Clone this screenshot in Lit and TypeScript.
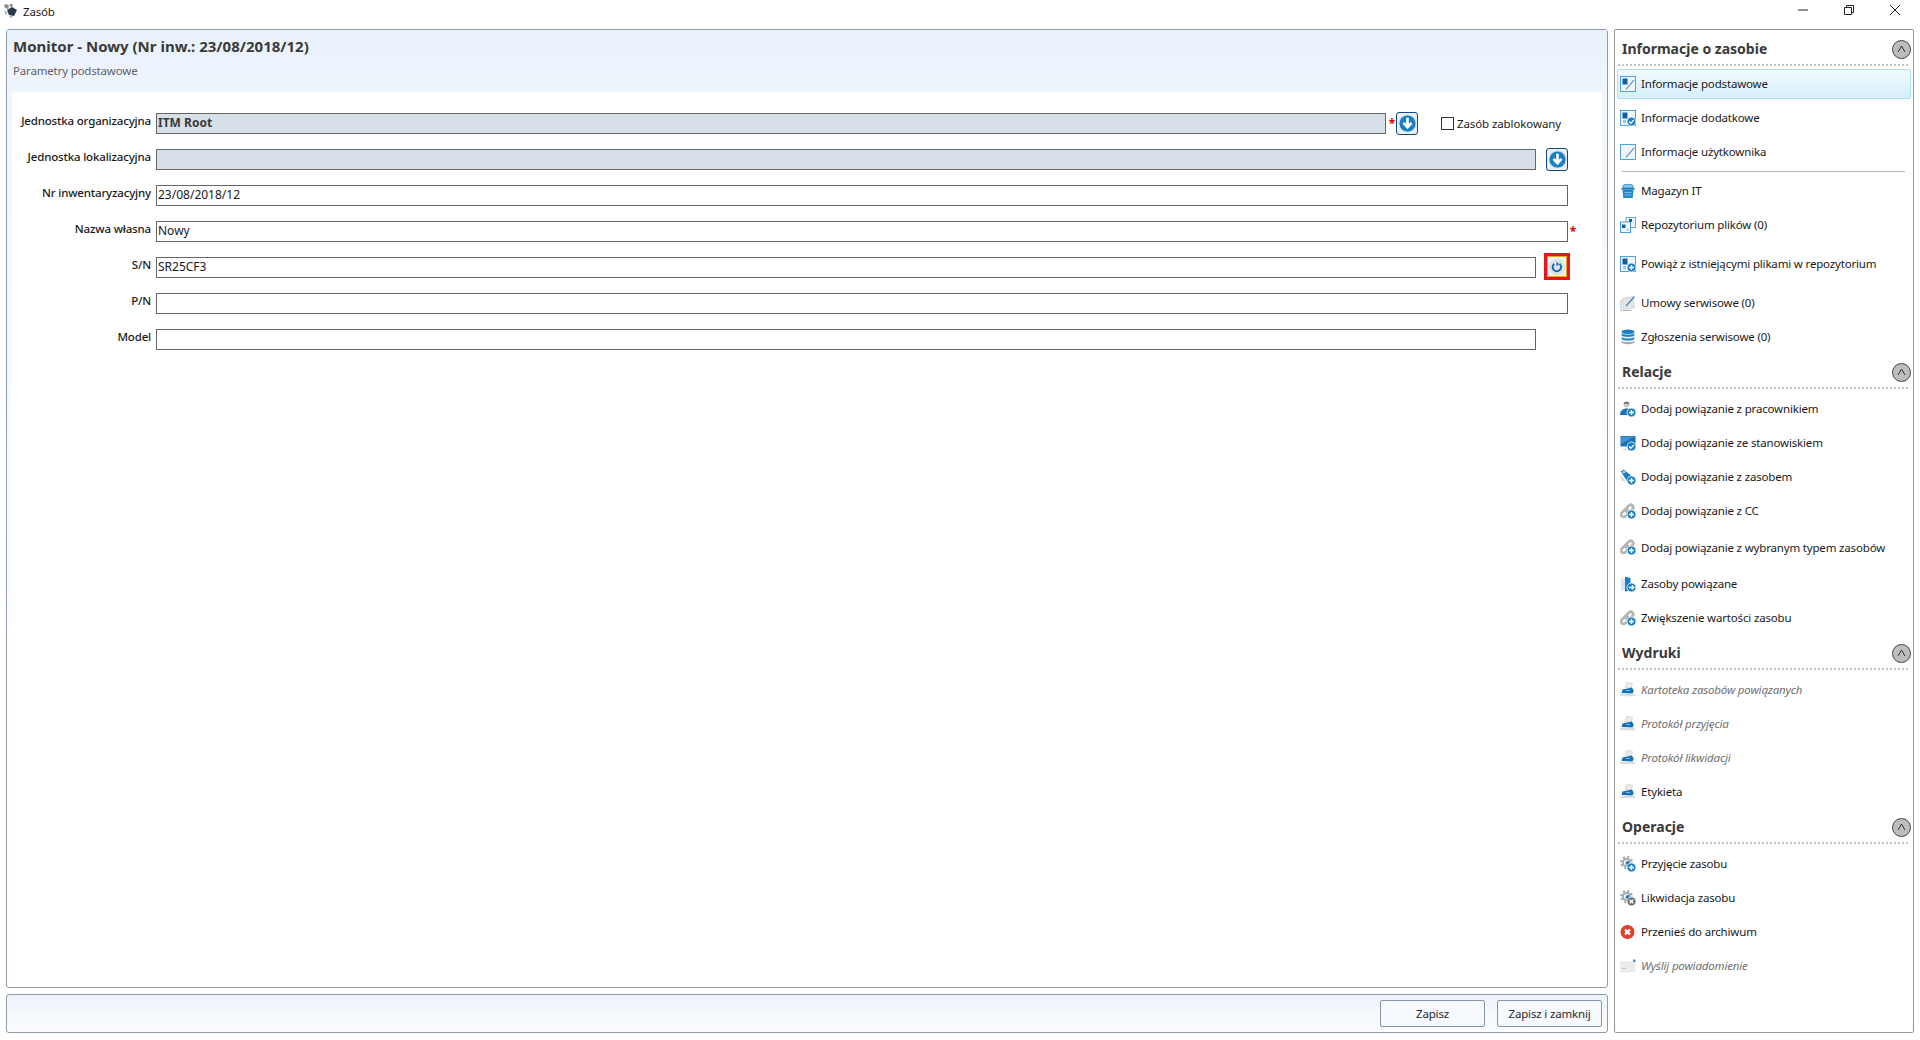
import { LitElement, html, css, svg } from "lit";
import { customElement } from "lit/decorators.js";

const plus = svg`<circle cx="11.5" cy="11.5" r="4.5" fill="#1b7fc4" stroke="#fff" stroke-width=".8"/><path d="M9 11.5h5M11.5 9v5" stroke="#fff" stroke-width="1.5"/>`;
const check = svg`<circle cx="11.5" cy="11.5" r="4.5" fill="#1b7fc4" stroke="#fff" stroke-width=".8"/><path d="M9.2 11.5l1.7 1.8 3-3.4" stroke="#fff" stroke-width="1.4" fill="none"/>`;
const arrow = svg`<circle cx="11.5" cy="11.5" r="4.5" fill="#1b7fc4" stroke="#fff" stroke-width=".8"/><path d="M9 11.5h4.5M11.8 9.5l2 2-2 2" stroke="#fff" stroke-width="1.3" fill="none"/>`;
const xbadge = svg`<circle cx="11.5" cy="11.5" r="4.5" fill="#6f6f6f" stroke="#fff" stroke-width=".8"/><path d="M9.7 9.7l3.6 3.6M13.3 9.7l-3.6 3.6" stroke="#fff" stroke-width="1.3"/>`;
const frame = svg`<rect x=".5" y=".5" width="15" height="15" fill="#eef6fc" stroke="#4fa3dc"/>`;
const slash = svg`<path d="M6 13.500L14 4" stroke="#3f86bd" stroke-width="1.100"/>`;
const chain = svg`<g transform="rotate(-45 7.500 7.500)" fill="none" stroke="#b6b6b6" stroke-width="2.800"><rect x="-.5" y="5" width="8.500" height="5" rx="2.500"/><rect x="6" y="5" width="8.500" height="5" rx="2.500"/></g>`;
const gears = svg`<circle cx="6.500" cy="6.500" r="5.300" fill="none" stroke="#a4a9ae" stroke-width="2.400" stroke-dasharray="2 2.160"/><circle cx="6.500" cy="6.500" r="3.600" fill="none" stroke="#a4a9ae" stroke-width="2"/><circle cx="7.500" cy="7" r="2" fill="#2f7fbe"/>`;
const printer = svg`<path d="M5 5.500L6.500 0l6 1.500L11.500 6z" fill="#eaeaea" stroke="#cfcfcf" stroke-width=".6"/><path d="M1.500 11l1-3.500 9.500-2 1.800 3.500-1.300 2.500z" fill="#1671ba"/><path d="M0 12h14.500l.5 2.300H.5z" fill="#dcdcdc"/><path d="M6 8.500h4" stroke="#7db7e4" stroke-width="1"/>`;

const icons: Record<string, unknown> = {
  basic: svg`${frame}<rect x="2.500" y="2.500" width="5" height="6" fill="#12619f"/>${slash}`,
  extra: svg`${frame}<rect x="2.500" y="2.500" width="5" height="6" fill="#12619f"/><rect x="3" y="10" width="3" height="3" fill="#9cc7e8"/>${check}`,
  user: svg`${frame}${slash}`,
  store: svg`<path d="M3 2.500C3 1 13 1 13 2.500V5H3z" fill="#8ec6ea" stroke="#1b7fc4" stroke-width=".8"/><path d="M1.500 5h13v1.800h-13z" fill="#1b7fc4"/><path d="M2.500 7h11l-.8 8H3.300z" fill="#2289ce"/><path d="M4.500 9.500h7M4.500 12h7" stroke="#8ec6ea" stroke-width=".8"/>`,
  repo: svg`<rect x="6" y=".5" width="9.500" height="10" fill="#eaf3fa" stroke="#6aa8d8"/><rect x="9" y="2" width="3" height="3" fill="#12619f"/><rect x=".5" y="5" width="10" height="10.500" fill="#f6fafd" stroke="#4a9ad4"/><rect x="2" y="7.500" width="3.500" height="3.500" fill="#12619f"/><rect x="6.500" y="11.500" width="2.500" height="2.500" fill="#b8d6ee"/>`,
  bind: svg`${frame}<rect x="2.500" y="2.500" width="5" height="6" fill="#12619f"/><rect x="3" y="10" width="3" height="3" fill="#9cc7e8"/>${plus}`,
  contract: svg`<path d="M2.500 3.500L12.500 1.500l2 11-11 2.500z" fill="#e4e4e4" stroke="#c9c9c9" stroke-width=".7"/><path d="M1 5v10.500h11" fill="none" stroke="#bdbdbd"/><path d="M6 11l8.500-9.500" stroke="#3f87bd" stroke-width="1.200"/>`,
  db: svg`<ellipse cx="8" cy="2.800" rx="6.500" ry="2.300" fill="#1b7fc4"/><path d="M1.500 3.800v2.600C3 8.700 13 8.700 14.500 6.400V3.800C13 6 3 6 1.500 3.800z" fill="#1b7fc4" stroke="#fff" stroke-width=".4"/><path d="M1.500 7.600v2.600C3 12.500 13 12.500 14.500 10.200V7.600C13 9.800 3 9.800 1.500 7.600z" fill="#2a8ccf" stroke="#fff" stroke-width=".4"/><path d="M1.500 11.400v1.800C3 15.800 13 15.800 14.500 13.200v-1.800C13 13.600 3 13.600 1.500 11.400z" fill="#a2a8ad"/>`,
  person: svg`<circle cx="6.500" cy="3.500" r="3" fill="#c9c9c9"/><path d="M3.500 3c1-3 5-3 6 0-2-.8-4-.8-6 0z" fill="#666"/><path d="M0 14c0-4 3-6.500 6.500-6.500S13 10 13 14z" fill="#1873b9"/>${plus}`,
  monitor: svg`<rect x=".5" y="1" width="15" height="10.500" fill="#1b6eb0"/><path d="M1 1.500h14L1 9z" fill="#3f95d2"/><path d="M4 13.500h8l1.500 2h-11z" fill="#dedede"/>${check}`,
  mouse: svg`<path d="M.8 2.200L4 .8l8.500 7-2 5-3.500-.6z" fill="#1b7ac0"/><path d="M1.500 3l3-1.500 2 1.500-3 1.800z" fill="#9cc7e8"/><path d="M.5 5.500l5 6.500h-3.500z" fill="#d8d8d8"/>${plus}`,
  chain: svg`${chain}${plus}`,
  doc: svg`<rect x="1" y="2.500" width="4" height="12" fill="#dbe5ee"/><path d="M5 .8l5.500 1.200v12.500L5 15.500z" fill="#1b7fc4"/>${arrow}`,
  print: printer,
  gearplus: svg`${gears}${plus}`,
  gearx: svg`${gears}${xbadge}`,
  del: svg`<circle cx="7.500" cy="8" r="7" fill="#dd4128"/><path d="M5 5.500l5 5M10 5.500l-5 5" stroke="#fff" stroke-width="2.300"/>`,
  mail: svg`<rect x="0" y="4" width="15" height="10" fill="#ececec" stroke="#e0e0e0" stroke-width=".5"/><path d="M2 10.500h4" stroke="#c4c4c4"/><rect x="13" y="1.500" width="2.500" height="2.500" fill="#4a9ad4"/>`,
};

type Item = { t: string; i: string; dis?: boolean; sel?: boolean; tall?: number };
const sections: { title: string; items: (Item | "sep")[] }[] = [
  { title: "Informacje o zasobie", items: [
    { t: "Informacje podstawowe", i: "basic", sel: true },
    { t: "Informacje dodatkowe", i: "extra" },
    { t: "Informacje użytkownika", i: "user" },
    "sep",
    { t: "Magazyn IT", i: "store" },
    { t: "Repozytorium plików (0)", i: "repo" },
    { t: "Powiąż z istniejącymi plikami w repozytorium", i: "bind", tall: 44 },
    { t: "Umowy serwisowe (0)", i: "contract" },
    { t: "Zgłoszenia serwisowe (0)", i: "db" },
  ]},
  { title: "Relacje", items: [
    { t: "Dodaj powiązanie z pracownikiem", i: "person" },
    { t: "Dodaj powiązanie ze stanowiskiem", i: "monitor" },
    { t: "Dodaj powiązanie z zasobem", i: "mouse" },
    { t: "Dodaj powiązanie z CC", i: "chain" },
    { t: "Dodaj powiązanie z wybranym typem zasobów", i: "chain", tall: 39 },
    { t: "Zasoby powiązane", i: "doc" },
    { t: "Zwiększenie wartości zasobu", i: "chain" },
  ]},
  { title: "Wydruki", items: [
    { t: "Kartoteka zasobów powiązanych", i: "print", dis: true },
    { t: "Protokół przyjęcia", i: "print", dis: true },
    { t: "Protokół likwidacji", i: "print", dis: true },
    { t: "Etykieta", i: "print" },
  ]},
  { title: "Operacje", items: [
    { t: "Przyjęcie zasobu", i: "gearplus" },
    { t: "Likwidacja zasobu", i: "gearx" },
    { t: "Przenieś do archiwum", i: "del" },
    { t: "Wyślij powiadomienie", i: "mail", dis: true },
  ]},
];

const downBtn = html`<span class="pick"><svg width="19" height="19" viewBox="0 0 19 19"><circle cx="9.500" cy="9.500" r="9" fill="#bfdcf0"/><circle cx="9.500" cy="9.500" r="8" fill="#1b7fc4"/><path d="M9.500 3.800v9M5.500 8.800l4 4.400 4-4.400" stroke="#fff" stroke-width="2.600" fill="none"/></svg></span>`;

@customElement("app-root")
export class AppRoot extends LitElement {
  static styles = css`
    :host { display: flex; flex-direction: column; width: 1920px; height: 1040px; background: #fff; font-family: "Noto Sans", "Open Sans", sans-serif; font-size: 11.5px; letter-spacing: -0.17px; color: #1a1a1a; overflow: hidden; }
    .titlebar { height: 29px; display: flex; align-items: flex-start; flex: none; }
    .appicon { margin: 4px 6px 0 4px; }
    .apptitle { margin-top: 4px; line-height: 16px; }
    .win { margin-left: auto; display: flex; padding-right: 2px; padding-top: 5px; }
    .win span { width: 46px; height: 10px; display: flex; justify-content: center; }
    .body { flex: 1; display: flex; gap: 6px; padding: 0 6px 7px 6px; min-height: 0; }
    .left { flex: 1; display: flex; flex-direction: column; gap: 6px; min-width: 0; }
    .main { flex: 1; border: 1px solid #8f9ba8; border-radius: 3px; background: linear-gradient(#eff5fc, #ffffff 70%); display: flex; flex-direction: column; min-height: 0; }
    .head { height: 62px; flex: none; padding: 6px 0 0 6px; box-sizing: border-box; background: linear-gradient(#e8f1fb, #f0f5fd); }
    .title { font-size: 15px; font-weight: 700; line-height: 20px; color: #3a3a3a; letter-spacing: 0; }
    .sub { margin-top: 7px; line-height: 16px; color: #5f5f66; }
    .form { flex: 1; margin: 0 5px; padding-top: 21px; background: #fff; }
    .row { height: 36px; display: flex; align-items: flex-start; }
    .lab { width: 144px; flex: none; text-align: right; line-height: 15px; font-weight: 500; padding-right: 5px; box-sizing: border-box; white-space: nowrap; }
    .field { flex: 1; height: 21px; box-sizing: border-box; border: 1px solid #666; padding-left: 1px; line-height: 18px; font-size: 12px; letter-spacing: 0; background: #fff; min-width: 0; }
    .field.ro { background: #d7dfe9; }
    .field.strong { font-weight: 700; color: #3a3a3a; }
    .trail { flex: none; display: flex; align-items: flex-start; }
    .t1 { width: 216px; } .t2 { width: 66px; } .t3 { width: 34px; }
    .req { color: #e00000; font-weight: 700; font-size: 12px; line-height: 21px; width: 8px; margin-left: 2px; text-align: center; }
    .req.near { margin-left: 1px; }
    .pick { width: 22px; height: 23px; box-sizing: border-box; margin: -1px 0 0 10px; border: 1px solid #0b4a86; border-radius: 3px; background: #efefef; display: flex; align-items: center; justify-content: center; }
    .t1 .pick { margin-left: 0; }
    .flag { box-sizing: border-box; width: 26px; height: 27px; margin: -4px 0 0 8px; border: 3px solid #e8141c; display: block; }
    .flag span { display: flex; width: 20px; height: 21px; box-sizing: border-box; border: 1px solid #e5a41c; background: #f3f3f3; align-items: center; justify-content: center; }
    .check { display: flex; align-items: center; margin-left: 23px; height: 21px; gap: 3px; white-space: nowrap; letter-spacing: -0.1px; }
    .box { width: 13px; height: 13px; box-sizing: border-box; border: 1px solid #333; background: #fff; }
    .foot { height: 39px; flex: none; box-sizing: border-box; border: 1px solid #8f9ba8; border-radius: 3px; background: linear-gradient(#eef3fb, #fcfdfe); display: flex; justify-content: flex-end; gap: 12px; padding: 5px 5px 0 0; }
    .btn { width: 105px; height: 27px; box-sizing: border-box; border: 1px solid #8496aa; border-radius: 2px; background: #f6f9fd; display: flex; align-items: center; justify-content: center; color: #2a2a2a; }
    .side { width: 300px; flex: none; box-sizing: border-box; border: 1px solid #969696; border-radius: 2px; background: #fff; }
    .sh { height: 36px; box-sizing: border-box; margin: 0 5px 2px 3px; padding: 3px 0 0 4px; border-bottom: 2px dotted #c4c4c4; display: flex; align-items: center; justify-content: space-between; }
    .sh b { font-size: 14px; font-weight: 700; color: #3a3a3a; letter-spacing: 0; }
    .circ { margin-right: -3px; margin-top: 1px; width: 19px; height: 19px; }
    .item { height: 34px; display: flex; align-items: center; margin: 0 2px; padding: 1px 0 0 3px; box-sizing: border-box; white-space: nowrap; }
    .item svg { width: 16px; height: 16px; flex: none; margin-right: 5px; }
    .item.sel { height: 30px; margin: 3px 2px 1px 2px; padding: 0 0 1px 2px; border: 1px solid #a9e0f6; border-radius: 2px; background: linear-gradient(#f4fbfe, #d4effb); }
    .item.dis { color: #6f6f6f; font-style: italic; }
    .sep { height: 1px; background: #b5b5b5; margin: 3px 8px 1px 7px; }
  `;

  private row(label: string, cls: string, value: string, trail: unknown, tcls: string) {
    return html`<div class="row"><div class="lab">${label}</div><div class="field ${cls}">${value}</div><div class="trail ${tcls}">${trail}</div></div>`;
  }

  render() {
    const tall = (n?: number) => (n ? `height:${n}px` : "");
    return html`
      <div class="titlebar">
        <svg class="appicon" width="13" height="14" viewBox="0 0 13 14"><path d="M0 1l3-1 2 2-1 3-3-1zM5 0h3l1 2-2 1.500z" fill="#8a9097"/><path d="M3 6l5-3 5 3-3 6-5-1z" fill="#2a3a4a"/><path d="M0 7l3 1-1 3zM5 12l4 .5-2 1.500z" fill="#9aa0a6"/></svg>
        <span class="apptitle">Zasób</span>
        <div class="win">
          <span><svg width="10" height="10" viewBox="0 0 10 10"><path d="M0 5h10" stroke="#222"/></svg></span>
          <span><svg width="10" height="10" viewBox="0 0 10 10" fill="none" stroke="#222"><path d="M.5 2.500h7v7h-7zM2.500 2.500V.5h7v7h-2"/></svg></span>
          <span><svg width="10" height="10" viewBox="0 0 10 10"><path d="M0 0l10 10M10 0L0 10" stroke="#222"/></svg></span>
        </div>
      </div>
      <div class="body">
        <div class="left">
          <div class="main">
            <div class="head">
              <div class="title">Monitor - Nowy (Nr inw.: 23/08/2018/12)</div>
              <div class="sub">Parametry podstawowe</div>
            </div>
            <div class="form">
              ${this.row("Jednostka organizacyjna", "ro strong", "ITM Root", html`<span class="req">*</span>${downBtn}<label class="check"><span class="box"></span>Zasób zablokowany</label>`, "t1")}
              ${this.row("Jednostka lokalizacyjna", "ro", "", downBtn, "t2")}
              ${this.row("Nr inwentaryzacyjny", "", "23/08/2018/12", "", "t3")}
              ${this.row("Nazwa własna", "", "Nowy", html`<span class="req near">*</span>`, "t3")}
              ${this.row("S/N", "", "SR25CF3", html`<span class="flag"><span><svg width="18" height="18" viewBox="0 0 18 18"><circle cx="9" cy="9" r="8.500" fill="#dfe3e8"/><path d="M6.200 5.800A4.200 4.200 0 1 0 11.500 5.800" fill="none" stroke="#1b6eb0" stroke-width="2"/><path d="M8.500 3.500v5l2.500-2.500z" fill="#1b6eb0"/></svg></span></span>`, "t2")}
              ${this.row("P/N", "", "", "", "t3")}
              ${this.row("Model", "", "", "", "t2")}
            </div>
          </div>
          <div class="foot"><div class="btn">Zapisz</div><div class="btn">Zapisz i zamknij</div></div>
        </div>
        <div class="side">
          ${sections.map(s => html`
            <div class="sh"><b>${s.title}</b><svg class="circ" viewBox="0 0 19 19"><circle cx="9.500" cy="9.500" r="9" fill="#bdbdbd" stroke="#444"/><path d="M6 12l3.500-6L13 12" fill="none" stroke="#333"/></svg></div>
            ${s.items.map(it => it === "sep" ? html`<div class="sep"></div>` : html`
              <div class="item ${it.sel ? "sel" : ""} ${it.dis ? "dis" : ""}" style=${tall(it.tall)}><svg viewBox="0 0 16 16">${icons[it.i]}</svg>${it.t}</div>`)}
          `)}
        </div>
      </div>`;
  }
}
